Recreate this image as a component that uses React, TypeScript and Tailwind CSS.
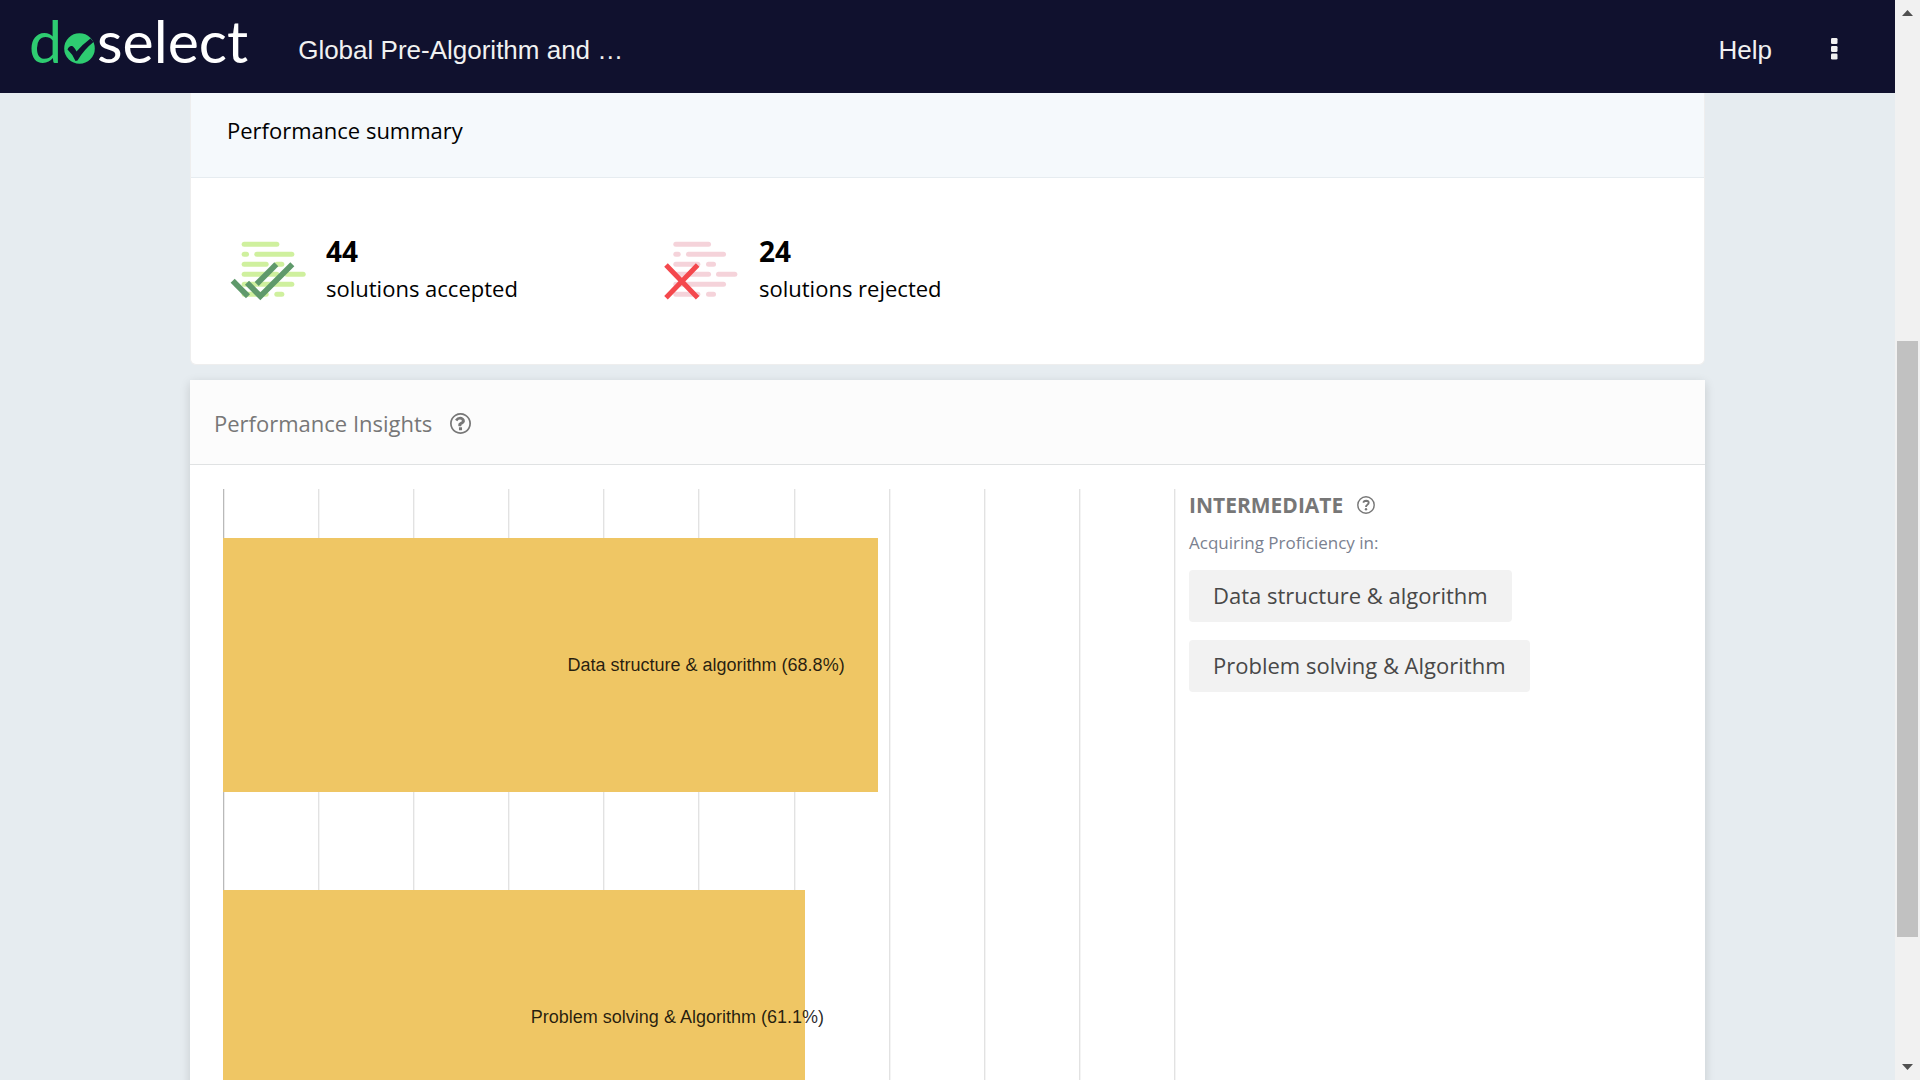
const sans = "font-['Open_Sans','Noto_Sans',sans-serif]";
const arial = "font-['Liberation_Sans',Arial,sans-serif]";

const skills = [
  { name: "Data structure & algorithm", score: 68.8 },
  { name: "Problem solving & Algorithm", score: 61.1 },
];

const gridLines = Array.from({ length: 11 }, (_, i) => i * 10);

function Logo() {
  return (
    <a href="#home" aria-label="doselect" className="flex h-[93px] items-start pt-[6px] pl-[29px] font-['Lato',sans-serif] text-[59px] leading-[70px] text-white">
      <span className="text-[#2ecc71]">d</span>
      <svg viewBox="0 0 31 31" className="mx-[2px] mt-[27px] h-[31px] w-[31px]" aria-hidden="true">
        <circle cx="15.5" cy="15.5" r="15.3" fill="#2ecc71" />
        <path d="M3.5 16.5 Q5 12.5 8 13 Q10 13.5 12.5 18.5 Q19 11 26.5 5.5 L29.5 9 Q20 16.5 13.5 27.5 L11.5 28 Q8.5 21 3.5 16.5 Z" fill="#10112e" />
      </svg>
      <span>select</span>
    </a>
  );
}

function QuestionBold() {
  return (
    <svg viewBox="128 128 1536 1536" className="h-[21px] w-[21px]" fill="currentColor" aria-hidden="true">
      <path d="M1008 1200v160q0 14-9 23t-23 9h-160q-14 0-23-9t-9-23v-160q0-14 9-23t23-9h160q14 0 23 9t9 23zm208-496q0 50-15.500 90t-45.500 69-52 44-59 36q-32 18-46.500 28t-26 24-11.500 29v32q0 14-9 23t-23 9h-160q-14 0-23-9t-9-23v-68q0-35 10.500-64.500t24-47.500 39-35.500 41-25.500 44.500-21q53-25 75-43t22-49q0-42-43.500-71.500t-95.500-29.500q-56 0-95 27-29 20-80 83-9 12-25 12-11 0-19-6l-108-82q-10-7-12-20t5-23q122-192 349-192 129 0 238.500 89.500t109.500 214.500zm-320-448q-130 0-248.500 51t-204 136.500-136.500 204-51 248.500 51 248.500 136.500 204 204 136.500 248.500 51 248.500-51 204-136.500 136.500-204 51-248.500-51-248.500-136.500-204-204-136.500-248.500-51zm768 640q0 209-103 385.500t-279.500 279.500-385.500 103-385.500-103-279.500-279.500-103-385.500 103-385.500 279.500-279.500 385.500-103 385.500 103 279.500 279.500 103 385.500z" />
    </svg>
  );
}

function QuestionLight() {
  return (
    <svg viewBox="0 0 18 18" className="h-[18px] w-[18px]" fill="none" stroke="currentColor" aria-hidden="true">
      <circle cx="9" cy="9" r="8.2" strokeWidth="1.4" />
      <path d="M6.200 6.600 Q7 4.700 9.100 4.700 Q11.700 4.800 11.700 6.800 Q11.700 8 10.300 8.800 Q9 9.500 9 10.900" strokeWidth="1.900" />
      <circle cx="9" cy="13.200" r="1.200" fill="currentColor" stroke="none" />
    </svg>
  );
}

const rows: [number, number, number][] = [
  [0, 113, 0],
  [0, 22, 1],
  [38, 158, 1],
  [0, 81, 2],
  [98, 128, 2],
  [0, 113, 3],
  [128, 192, 3],
  [0, 158, 4],
  [0, 81, 5],
  [98, 128, 5],
];

function CodeLines({ x, color }: { x: number; color: string }) {
  return (
    <g fill={color}>
      {rows.map(([from, to, row]) => (
        <rect key={`${from}-${row}`} x={x + from} y={95 + row * 30} width={to - from} height="15" rx="7.5" />
      ))}
    </g>
  );
}

function AcceptedIcon() {
  return (
    <svg viewBox="150 90 228 183" className="mt-[2px] h-[61px] w-[76px]" aria-hidden="true">
      <CodeLines x={185} color="#cff09e" />
      <g fill="none" stroke="#5f996b" strokeWidth="17">
        <path d="M158 212 L204 259" />
        <path d="M289 163 L230 222" />
        <path d="M201 218 L241 259 L337 163" />
      </g>
    </svg>
  );
}

function RejectedIcon() {
  return (
    <svg viewBox="131 90 228 183" className="mt-[2px] h-[61px] w-[76px]" aria-hidden="true">
      <CodeLines x={162} color="#f5d3da" />
      <path d="M140 165 L235 263 M235 165 L140 263" fill="none" stroke="#f4484d" strokeWidth="15" />
    </svg>
  );
}

function Header() {
  return (
    <header className={`flex h-[93px] shrink-0 items-center bg-[#10112e] text-[26px] text-[#f1f1f1] ${arial}`}>
      <Logo />
      <h1 className="ml-[50px] pt-[8px]">Global Pre-Algorithm and …</h1>
      <nav className="ml-auto flex items-center">
        <a href="#help" className="pt-[8px]">Help</a>
        <button type="button" aria-label="More options" className="mr-[57px] ml-[59px] pt-[4px]">
          <svg viewBox="0 0 7 22" className="h-[22px] w-[7px]" fill="#f1f1f1" aria-hidden="true">
            <rect y="0" width="6.5" height="6" rx="1.3" />
            <rect y="8" width="6.5" height="6" rx="1.3" />
            <rect y="15.5" width="6.5" height="6" rx="1.3" />
          </svg>
        </button>
      </nav>
    </header>
  );
}

function Stat({ value, label }: { value: number; label: string }) {
  return (
    <p>
      <strong className="block text-[28px] leading-[26px]">{value}</strong>
      <span className="block pt-[8px] text-[22px] leading-[32px]">{label}</span>
    </p>
  );
}

function Summary() {
  return (
    <section className="overflow-hidden rounded-b-md border border-t-0 border-[#eeeeee] bg-white text-black">
      <h2 className="h-[85px] border-b border-[#e6ecf0] bg-[#f5f9fc] pt-[21px] pl-[36px] text-[22px] leading-[32px]">
        Performance summary
      </h2>
      <div className="flex h-[186px] pt-[60px] pl-[39px]">
        <div className="flex w-[433px] gap-[20px]">
          <AcceptedIcon />
          <Stat value={44} label="solutions accepted" />
        </div>
        <div className="flex gap-[20px]">
          <RejectedIcon />
          <Stat value={24} label="solutions rejected" />
        </div>
      </div>
    </section>
  );
}

function Chart() {
  return (
    <div className={`relative h-[704px] text-[18px] text-black/85 ${arial}`}>
      <div className="absolute inset-y-0 left-0 -right-px flex justify-between" aria-hidden="true">
        {gridLines.map((v) => (
          <span
            key={v}
            className={v === 0 ? "w-[2px] border-l border-[#b9b9b9] bg-[#ececec]" : "w-[2px] border-l border-[#e2e2e2] bg-[#f4f4f4]"}
          />
        ))}
      </div>
      <div className="relative flex h-full flex-col justify-around">
        {skills.map((s) => (
          <div key={s.name} className="flex h-[254px] items-center bg-[#efc664]" style={{ width: `${s.score}%` }}>
            <span className="ml-[50%] pl-[17px] whitespace-nowrap">
              {s.name} ({s.score}%)
            </span>
          </div>
        ))}
      </div>
    </div>
  );
}

function Insights() {
  return (
    <section className="mt-[15px] bg-white shadow-[0_3px_10px_rgba(0,0,0,0.14)]">
      <div className="flex h-[85px] items-center gap-[18px] border-b border-[#e0e2e3] bg-[#fcfcfc] pt-[2px] pl-[24px] text-[#777777]">
        <h2 className="text-[22px] leading-[32px]">Performance Insights</h2>
        <button type="button" aria-label="About performance insights">
          <QuestionBold />
        </button>
      </div>
      <div className="grid grid-cols-[952fr_516fr] gap-[14px] pt-[24px] pl-[33px]">
        <Chart />
        <div>
          <div className="flex items-center gap-[14px] text-[#777777]">
            <h3 className="text-[21px] leading-[32px] font-bold">INTERMEDIATE</h3>
            <button type="button" aria-label="About the intermediate level">
              <QuestionLight />
            </button>
          </div>
          <p className="pt-[8px] text-[17px] leading-[28px] text-[#7a8190]">Acquiring Proficiency in:</p>
          <ul className="flex flex-col items-start gap-[18px] pt-[13px] text-[22px] text-[#484848]">
            {skills.map((s) => (
              <li key={s.name} className="h-[52px] rounded bg-[#f2f2f2] px-[24px] leading-[50px]">
                {s.name}
              </li>
            ))}
          </ul>
        </div>
      </div>
    </section>
  );
}

function Scrollbar() {
  return (
    <div className="grid w-[25px] shrink-0 grid-rows-[25px_316fr_596fr_118fr_25px] justify-items-center bg-[#f1f1f1]" aria-hidden="true">
      <svg viewBox="0 0 25 25" className="h-[25px] w-[25px]"><path d="M7 16 L12.5 10 L18 16 Z" fill="#505050" /></svg>
      <span />
      <span className="w-[21px] bg-[#c1c1c1]" />
      <span />
      <svg viewBox="0 0 25 25" className="h-[25px] w-[25px]"><path d="M7 9 L12.5 15 L18 9 Z" fill="#505050" /></svg>
    </div>
  );
}

export default function App() {
  return (
    <div className={`flex h-screen overflow-hidden bg-[#e6ecf0] ${sans}`}>
      <div className="flex min-w-0 flex-1 flex-col">
        <Header />
        <main className="min-h-0 flex-1 overflow-hidden px-[190px]">
          <Summary />
          <Insights />
        </main>
      </div>
      <Scrollbar />
    </div>
  );
}
